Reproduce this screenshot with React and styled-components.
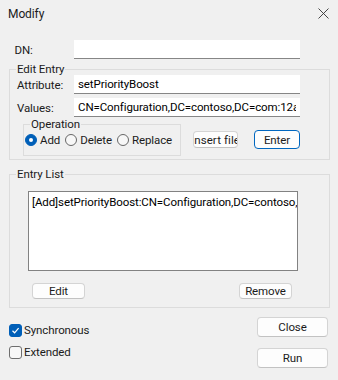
import React from 'react';
import styled, { createGlobalStyle } from 'styled-components';

const GlobalStyle = createGlobalStyle`
  body {
    margin: 0;
    background: #f0f0f0;
    font-family: "Segoe UI", Roboto, "Noto Sans", sans-serif;
    font-size: 11.5px;
    letter-spacing: -0.1px;
    color: #1b1b1b;
  }
`;

const Window = styled.div`
  width: 338px;
  height: 380px;
  background: #f0f0f0;
  overflow: hidden;
`;

const TitleBar = styled.div`
  height: 30px;
  display: flex;
  align-items: center;
  justify-content: space-between;
  padding: 0 9px 3px 8px;
  box-sizing: border-box;
  font-size: 12px;
`;

const Body = styled.div`
  padding: 10px 8px 0 9px;
`;

const Row = styled.div`
  display: flex;
  align-items: ${(p) => p.$align || 'center'};
  margin-top: ${(p) => p.$top || 0}px;
`;

const Label = styled.span`
  width: ${(p) => p.$width || 57}px;
  flex: none;
`;

const TextInput = styled.input`
  width: 226px;
  height: 19px;
  box-sizing: border-box;
  border: none;
  border-bottom: 1px solid #868686;
  background: #fff;
  padding: 0 4px;
  font: inherit;
  letter-spacing: inherit;
  color: #000;
  outline: none;
`;

const Group = styled.fieldset`
  margin: ${(p) => p.$top || 0}px 0 0 ${(p) => p.$left || 0}px;
  padding: 0;
  border: 1px solid #dcdcdc;
  min-width: 0;
  width: ${(p) => (p.$width ? `${p.$width}px` : 'auto')};
  box-sizing: border-box;
`;

const Legend = styled.legend`
  margin-left: 6px;
  padding: 0 1px;
  line-height: 12px;
`;

const Inner = styled.div`
  padding: ${(p) => p.$pad};
`;

const Button = styled.button`
  width: ${(p) => p.$width}px;
  height: ${(p) => p.$height || 18}px;
  margin-top: ${(p) => p.$top || 0}px;
  margin-left: ${(p) => p.$left || 0}px;
  box-sizing: border-box;
  display: flex;
  align-items: center;
  justify-content: center;
  overflow: hidden;
  white-space: nowrap;
  padding: 0;
  font: inherit;
  letter-spacing: ${(p) => p.$spacing || 'inherit'};
  color: #1b1b1b;
  background: #fdfdfd;
  border: 1px solid ${(p) => (p.$primary ? '#0067c0' : '#d4d4d4')};
  border-bottom-color: ${(p) => (p.$primary ? '#0067c0' : '#c2c2c2')};
  border-radius: 4px;
`;

const Options = styled.div`
  display: flex;
  align-items: center;
  height: 19px;
  padding: 0 4px 6px 1px;
`;

const Option = styled.label`
  display: flex;
  align-items: center;
  gap: 3px;
  margin-right: 5px;
`;

const RadioDot = styled.span`
  width: 12px;
  height: 12px;
  box-sizing: border-box;
  border-radius: 50%;
  flex: none;
  background: ${(p) => (p.$on ? '#005fb8' : '#f7f7f7')};
  border: 1px solid ${(p) => (p.$on ? '#005fb8' : '#676767')};
  display: flex;
  align-items: center;
  justify-content: center;
  &::after {
    content: '';
    display: ${(p) => (p.$on ? 'block' : 'none')};
    width: 4px;
    height: 4px;
    border-radius: 50%;
    background: #fff;
  }
`;

const ListBox = styled.div`
  width: 270px;
  height: 80px;
  margin-top: 11px;
  box-sizing: border-box;
  border: 1px solid #828282;
  background: #fff;
  padding: 3px 3px;
  white-space: nowrap;
  overflow: hidden;
  color: #000;
`;

const ListButtons = styled.div`
  width: 270px;
  display: flex;
  justify-content: space-between;
  padding: 12px 6px 8px 4px;
  box-sizing: border-box;
`;

const Footer = styled.div`
  display: flex;
  justify-content: space-between;
  margin-top: 9px;
`;

const Checks = styled.div`
  display: flex;
  flex-direction: column;
  gap: 4px;
  padding-top: 4px;
`;

const CheckRow = styled.label`
  display: flex;
  align-items: center;
  gap: 2px;
  height: 18px;
`;

const Box = styled.span`
  width: 13px;
  height: 13px;
  box-sizing: border-box;
  border-radius: 3px;
  flex: none;
  display: flex;
  align-items: center;
  justify-content: center;
  background: ${(p) => (p.$on ? '#005fb8' : '#f7f7f7')};
  border: 1px solid ${(p) => (p.$on ? '#005fb8' : '#6e6e6e')};
`;

const Actions = styled.div`
  display: flex;
  flex-direction: column;
  gap: 11px;
  margin-right: 2px;
`;

function Radio({ on, children }) {
  return (
    <Option>
      <RadioDot $on={on} />
      {children}
    </Option>
  );
}

function Check({ on, children }) {
  return (
    <CheckRow>
      <Box $on={on}>
        {on && (
          <svg width="9" height="9" viewBox="0 0 9 9">
            <path d="M1.5 4.8 L3.6 6.8 L7.6 2.2" fill="none" stroke="#fff" strokeWidth="1.2" />
          </svg>
        )}
      </Box>
      {children}
    </CheckRow>
  );
}

export default function App() {
  return (
    <Window>
      <GlobalStyle />
      <TitleBar>
        <span>Modify</span>
        <svg width="11" height="11" viewBox="0 0 11 11">
          <path d="M0.5 0.5 L10.5 10.5 M10.5 0.5 L0.5 10.5" stroke="#333" strokeWidth="0.9" />
        </svg>
      </TitleBar>
      <Body>
        <Row>
          <Label $width={65}>&nbsp;&nbsp;DN:</Label>
          <TextInput defaultValue="" />
        </Row>
        <Group $top={4}>
          <Legend>Edit Entry</Legend>
          <Inner $pad="0 28px 3px 7px">
            <Row>
              <Label>Attribute:</Label>
              <TextInput defaultValue="setPriorityBoost" />
            </Row>
            <Row $top={4}>
              <Label>Values:</Label>
              <TextInput defaultValue="CN=Configuration,DC=contoso,DC=com:12a" />
            </Row>
            <Row $align="flex-start">
              <Group $top={1} $left={6} $width={158}>
                <Legend>Operation</Legend>
                <Options>
                  <Radio on>Add</Radio>
                  <Radio>Delete</Radio>
                  <Radio>Replace</Radio>
                </Options>
              </Group>
              <Button $width={45} $height={17} $top={14} $left={12} $spacing="0.1px">Insert file</Button>
              <Button $width={46} $height={19} $top={13} $left={16} $primary>Enter</Button>
            </Row>
          </Inner>
        </Group>
        <Group $top={8}>
          <Legend>Entry List</Legend>
          <Inner $pad="0 0 0 18px">
            <ListBox>[Add]setPriorityBoost:CN=Configuration,DC=contoso,DC=com:12a</ListBox>
            <ListButtons>
              <Button $width={53} $height={16}>Edit</Button>
              <Button $width={53} $height={16}>Remove</Button>
            </ListButtons>
          </Inner>
        </Group>
        <Footer>
          <Checks>
            <Check on>Synchronous</Check>
            <Check>Extended</Check>
          </Checks>
          <Actions>
            <Button $width={71} $height={20}>Close</Button>
            <Button $width={71} $height={20}>Run</Button>
          </Actions>
        </Footer>
      </Body>
    </Window>
  );
}
